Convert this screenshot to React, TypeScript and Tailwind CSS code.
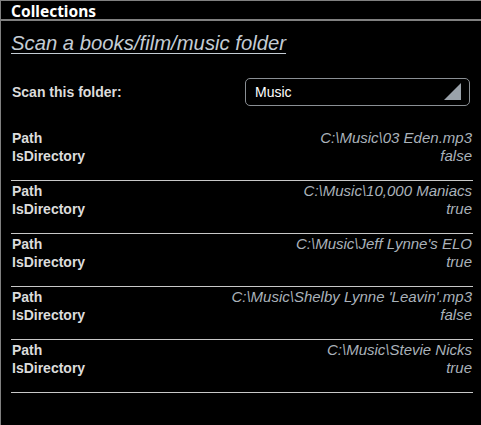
import React from "react";

const items = [
  { path: "C:\\Music\\03 Eden.mp3", dir: "false" },
  { path: "C:\\Music\\10,000 Maniacs", dir: "true" },
  { path: "C:\\Music\\Jeff Lynne's ELO", dir: "true" },
  { path: "C:\\Music\\Shelby Lynne 'Leavin'.mp3", dir: "false" },
  { path: "C:\\Music\\Stevie Nicks", dir: "true" },
];

export default function App() {
  return (
    <div
      className="w-[481px] h-[425px] bg-black border-t border-l border-[#808080] overflow-hidden"
      style={{ fontFamily: '"Liberation Sans", Arial, sans-serif' }}
    >
      <div
        className="h-[20px] pl-[10px] text-[15.5px] leading-[20px] font-bold text-white border-b-2 border-[#808080]"
        style={{ fontFamily: '"Noto Sans", "Liberation Sans", sans-serif' }}
      >
        Collections
      </div>
      <div className="pl-[10px] pr-[8px]">
        <div className="mt-[10px] text-[20.3px] leading-[24px] italic underline text-[#c4ccd4] decoration-1 underline-offset-[3px]">
          Scan a books/film/music folder
        </div>
        <div className="mt-[23px] flex items-center justify-between">
          <div className="text-[14px] font-bold text-[#dcdcdc] pl-[1px]">Scan this folder:</div>
          <div className="relative w-[225px] h-[28px] mr-[3px] rounded-[5px] border border-[#8a8f94] flex items-center pl-[9px] text-[14px] text-white">
            Music
            <div className="absolute right-[8px] bottom-[5px] w-0 h-0 border-l-[17px] border-l-transparent border-b-[17px] border-b-[#9aa2aa]" />
          </div>
        </div>
        <div className="mt-[22px]">
          {items.map((it, i) => (
            <div key={i} className="pt-[1px] pb-[15px] border-b border-[#c8c8c8]">
              <div className="flex justify-between text-[14px] leading-[18px]">
                <span className="font-bold text-[#dcdcdc] pl-[1px]">Path</span>
                <span className="italic text-[15px] text-[#aab2ba] pr-[1px]">{it.path}</span>
              </div>
              <div className="flex justify-between text-[14px] leading-[18px]">
                <span className="font-bold text-[#dcdcdc] pl-[1px]">IsDirectory</span>
                <span className="italic text-[15px] text-[#aab2ba] pr-[1px]">{it.dir}</span>
              </div>
            </div>
          ))}
        </div>
      </div>
    </div>
  );
}
